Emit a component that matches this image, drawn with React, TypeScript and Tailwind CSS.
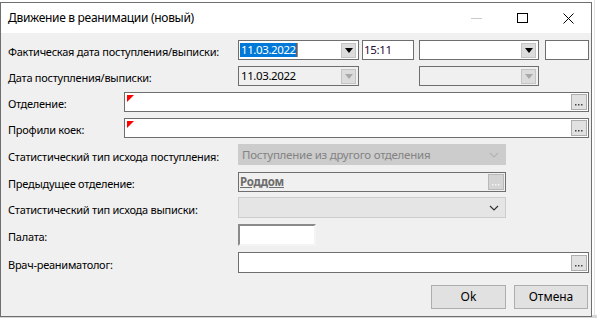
import React from "react";

const font = { fontFamily: '"Noto Sans", "Liberation Sans", sans-serif' };

function DropBtn({ disabled }: { disabled?: boolean }) {
  return (
    <div className="w-[15px] h-[15px] mr-[2px] border border-[#c4c4c4] bg-[#dcdcdc] flex items-center justify-center">
      <svg width="8" height="5" viewBox="0 0 8 5">
        <polygon points="0,0 8,0 4,5" fill={disabled ? "#a8a8a8" : "#000"} />
      </svg>
    </div>
  );
}

function DotsBtn({ disabled }: { disabled?: boolean }) {
  return (
    <div
      className={
        "w-[16px] h-[16px] mr-[1px] border flex items-end justify-center pb-[3px] " +
        (disabled ? "border-[#b8b8b8] bg-[#d4d4d4]" : "border-[#adadad] bg-[#e1e1e1]")
      }
    >
      <svg width="8" height="2" viewBox="0 0 8 2">
        <rect x="0" y="0" width="1.5" height="1.5" fill={disabled ? "#f4f4f4" : "#444"} />
        <rect x="3" y="0" width="1.5" height="1.5" fill={disabled ? "#f4f4f4" : "#444"} />
        <rect x="6" y="0" width="1.5" height="1.5" fill={disabled ? "#f4f4f4" : "#444"} />
      </svg>
    </div>
  );
}

function Chevron({ color }: { color: string }) {
  return (
    <svg width="10" height="6" viewBox="0 0 10 6" className="mr-[6px]">
      <polyline points="1,1 5,5 9,1" fill="none" stroke={color} strokeWidth="1.2" />
    </svg>
  );
}

function RedMark() {
  return (
    <svg width="7" height="7" viewBox="0 0 7 7" className="absolute left-[2px] top-[2px]">
      <polygon points="0,0 7,0 0,7" fill="#ff0000" />
    </svg>
  );
}

function Label({ children, w }: { children: React.ReactNode; w: string }) {
  return (
    <div className={"shrink-0 whitespace-nowrap text-[11px] tracking-[-0.25px] text-black leading-none pt-[3px] " + w}>
      {children}
    </div>
  );
}

export default function App() {
  return (
    <div className="w-[597px] h-[318px] bg-[#d6d6d6] overflow-hidden" style={font}>
      <div className="h-[315px] bg-white flex">
        <div className="w-[592px] h-[315px] mt-[2px] border border-[#6f6f6f] bg-[#f0f0f0] flex flex-col">
          {/* title bar */}
          <div className="h-[30px] bg-white flex items-center shrink-0">
            <div className="pl-[7px] text-[12px] tracking-[-0.3px] text-black whitespace-nowrap">Движение в реанимации (новый)</div>
            <div className="ml-auto flex items-center">
              <div className="w-[11px] h-[1px] bg-[#c9c9c9] mr-[35px]" />
              <div className="w-[11px] h-[10px] border border-black mr-[35px]" />
              <svg width="11" height="11" viewBox="0 0 11 11" className="mr-[17px]">
                <path d="M0.5 0.5 L10.5 10.5 M10.5 0.5 L0.5 10.5" stroke="#000" strokeWidth="1" />
              </svg>
            </div>
          </div>

          <div className="flex flex-col pl-[7px]">
            {/* row 1 */}
            <div className="flex items-center h-[20px] mt-[7px]">
              <Label w="w-[230px]">Фактическая дата поступления/выписки:</Label>
              <div className="w-[121px] h-[20px] border border-[#6e6e6e] bg-white flex items-center">
                <span className="ml-[1px] bg-[#0078d7] text-white text-[11.5px] tracking-[-0.4px] leading-[14px] px-[1px]">11.03.2022</span>
                <span className="w-[1px] h-[14px] bg-[#f07020]" />
                <div className="ml-auto"><DropBtn /></div>
              </div>
              <div className="w-[52px] h-[20px] ml-[3px] border border-[#6e6e6e] bg-white text-[11.5px] tracking-[-0.3px] text-[#2a0a3a] pl-[1px] leading-[17px]">15:11</div>
              <div className="w-[120px] h-[20px] ml-[5px] border border-[#6e6e6e] bg-white flex items-center justify-end">
                <DropBtn />
              </div>
              <div className="w-[44px] h-[20px] ml-[6px] border border-[#6e6e6e] bg-white" />
            </div>

            {/* row 2 */}
            <div className="flex items-center h-[20px] mt-[6px]">
              <Label w="w-[230px]">Дата поступления/выписки:</Label>
              <div className="w-[121px] h-[20px] border border-[#6e6e6e] bg-[#f0f0f0] flex items-center">
                <span className="ml-[2px] text-[11.5px] tracking-[-0.4px] text-black leading-[14px]">11.03.2022</span>
                <div className="ml-auto"><DropBtn disabled /></div>
              </div>
              <div className="w-[120px] h-[20px] ml-[60px] border border-[#6e6e6e] bg-[#f0f0f0] flex items-center justify-end">
                <DropBtn disabled />
              </div>
            </div>

            {/* row 3 */}
            <div className="flex items-center h-[20px] mt-[6px]">
              <Label w="w-[116px]">Отделение:</Label>
              <div className="relative w-[465px] h-[20px] border border-[#6e6e6e] bg-white flex items-center justify-end">
                <RedMark />
                <DotsBtn />
              </div>
            </div>

            {/* row 4 */}
            <div className="flex items-center h-[20px] mt-[6px]">
              <Label w="w-[116px]">Профили коек:</Label>
              <div className="relative w-[465px] h-[20px] border border-[#6e6e6e] bg-white flex items-center justify-end">
                <RedMark />
                <DotsBtn />
              </div>
            </div>

            {/* row 5 */}
            <div className="flex items-center h-[21px] mt-[6px]">
              <Label w="w-[230px]">Статистический тип исхода поступления:</Label>
              <div className="w-[268px] h-[21px] border border-[#cccccc] bg-[#cccccc] flex items-center">
                <span className="ml-[3px] text-[11.5px] tracking-[-0.25px] text-[#838383]">Поступление из другого отделения</span>
                <div className="ml-auto"><Chevron color="#b4b4b4" /></div>
              </div>
            </div>

            {/* row 6 */}
            <div className="flex items-center h-[20px] mt-[7px]">
              <Label w="w-[230px]">Предыдущее отделение:</Label>
              <div className="w-[268px] h-[20px] border border-[#6e6e6e] bg-[#f0f0f0] flex items-center">
                <span className="ml-[1px] text-[11.5px] tracking-[-0.3px] font-bold underline text-[#6d6d6d] leading-[14px]">Роддом</span>
                <div className="ml-auto"><DotsBtn disabled /></div>
              </div>
            </div>

            {/* row 7 */}
            <div className="flex items-center h-[21px] mt-[5px]">
              <Label w="w-[230px]">Статистический тип исхода выписки:</Label>
              <div className="w-[268px] h-[21px] border border-[#cccccc] bg-[#e5e5e5] flex items-center justify-end">
                <Chevron color="#333333" />
              </div>
            </div>

            {/* row 8 */}
            <div className="flex items-center h-[22px] mt-[6px]">
              <Label w="w-[230px]">Палата:</Label>
              <div className="w-[78px] h-[22px] border-2 border-t-[#8a8a8a] border-l-[#8a8a8a] border-b-[#f4f4f4] border-r-[#f4f4f4] bg-white" />
            </div>

            {/* row 9 */}
            <div className="flex items-center h-[21px] mt-[6px]">
              <Label w="w-[230px]">Врач-реаниматолог:</Label>
              <div className="w-[351px] h-[21px] border border-[#6e6e6e] bg-white flex items-center justify-end">
                <DotsBtn />
              </div>
            </div>

            {/* buttons */}
            <div className="flex justify-end mt-[12px] pr-[3px] gap-[8px]">
              <button className="w-[75px] h-[24px] border border-[#adadad] bg-[#e1e1e1] text-[12px] text-black">Ok</button>
              <button className="w-[74px] h-[24px] border border-[#adadad] bg-[#e1e1e1] text-[12px] text-black">Отмена</button>
            </div>
          </div>
        </div>
        <div className="flex-1 h-full border-l border-[#e2e2e2] ml-[2px]" />
      </div>
    </div>
  );
}
